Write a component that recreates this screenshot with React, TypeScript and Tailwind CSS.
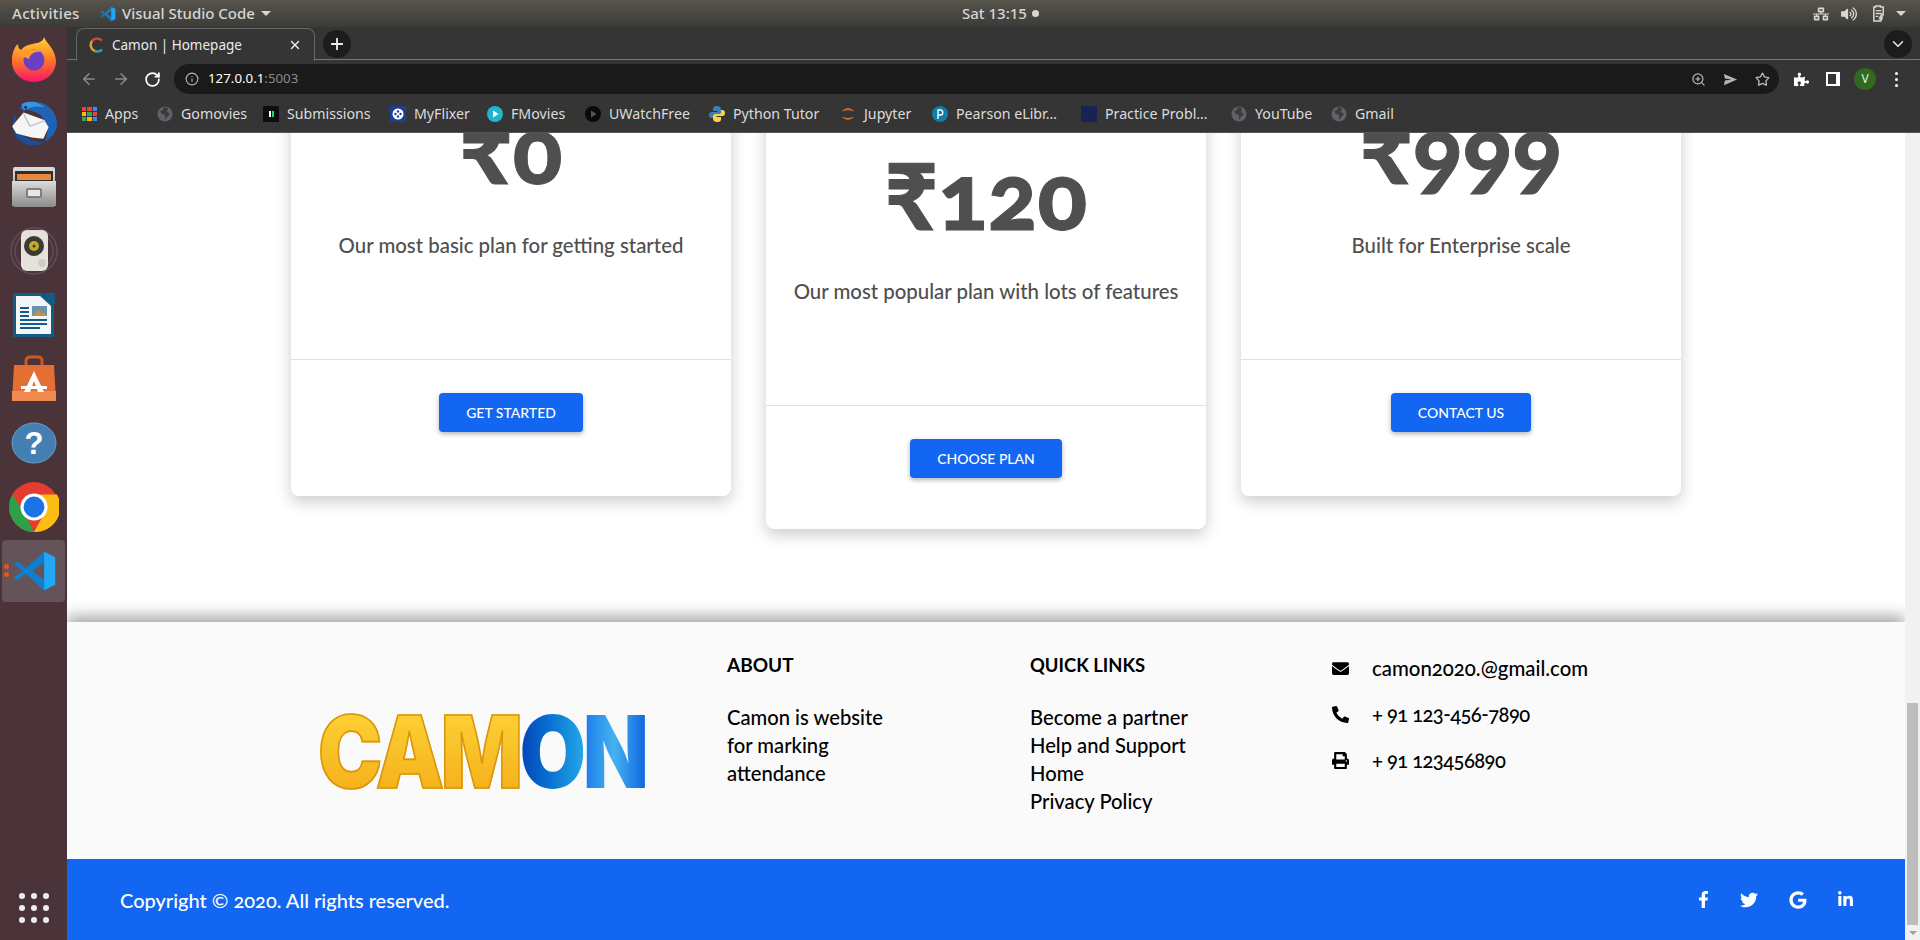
import { ArrowLeft, ArrowRight, ChevronDown, Info, Plus, RotateCw, Star, X, ZoomIn } from 'lucide-react';
import { FaEnvelope, FaFacebookF, FaGoogle, FaLinkedinIn, FaNetworkWired, FaPhoneAlt, FaPrint, FaPuzzlePiece, FaTwitter, FaVolumeUp } from 'react-icons/fa';

const ui = 'font-["Noto_Sans",sans-serif]';
const body = 'font-["Lato",sans-serif]';

function VsCode({ className }: { className: string }) {
    return (
        <svg viewBox="0 0 48 48" className={className}>
            <path d="M34 3 L46 9 V39 L34 45 L14 27 L5 34 L1 31 L11 24 L1 17 L5 14 L14 21 Z M34 14 L21 24 L34 34 Z" fill="#0e7fd0" fillRule="evenodd" />
            <path d="M34 3 L46 9 V39 L34 45 Z" fill="#22a7f2" />
        </svg>
    );
}

function Firefox() {
    return (
        <svg viewBox="0 0 48 48" className="w-12 h-12">
            <defs>
                <linearGradient id="ff" x1="0" y1="0" x2="0" y2="1">
                    <stop offset="0" stopColor="#ffd43a" />
                    <stop offset="0.5" stopColor="#ff7a25" />
                    <stop offset="1" stopColor="#f5156c" />
                </linearGradient>
            </defs>
            <path d="M34 2 C36 8 45 13 46 26 C46 38 36 47 24 47 C11 47 1 37 2 24 C2 18 5 11 8 9 C8 12 9 14 11 15 C14 11 18 10 22 9 C26 8 33 8 34 2 Z" fill="url(#ff)" />
            <circle cx="24" cy="25" r="10.5" fill="#6b3fc4" />
            <path d="M8 20 C14 14 24 13 31 17 C25 16 20 19 19 24 C15 22 11 22 8 20 Z" fill="#ff9a2e" />
        </svg>
    );
}

function Thunderbird() {
    return (
        <svg viewBox="0 0 48 48" className="w-[50px] h-[50px]">
            <path d="M10 10 C18 0 36 2 43 14 C49 24 46 36 34 42 C40 30 36 18 26 14 C20 11 14 11 10 10 Z" fill="#1f64b4" />
            <path d="M6 16 C2 24 3 36 12 42 C20 47 30 46 34 42 C24 44 12 38 8 26 Z" fill="#1a4f9c" />
            <path d="M12 6 C18 2 28 3 34 9 C26 7 20 9 14 12 Z" fill="#3a93e6" />
            <path d="M3 27 L14 14 L34 21 L38 28 L33 39 L22 38 L7 34 Z" fill="#f6f6f6" />
            <path d="M14 15 L20 27 L34 22" fill="none" stroke="#bfc5cf" strokeWidth="1.4" />
            <circle cx="16" cy="9" r="1.4" fill="#0c2f5c" />
        </svg>
    );
}

function Files() {
    return (
        <svg viewBox="0 0 48 48" className="w-12 h-12">
            <defs>
                <linearGradient id="cab" x1="0" y1="0" x2="0" y2="1">
                    <stop offset="0" stopColor="#dcdcda" />
                    <stop offset="1" stopColor="#8e8e8c" />
                </linearGradient>
            </defs>
            <rect x="3" y="4" width="42" height="40" rx="2" fill="url(#cab)" />
            <rect x="5" y="8" width="38" height="10" fill="#2f2f2f" />
            <rect x="7" y="11" width="34" height="6" fill="#e8883a" />
            <rect x="2" y="18" width="44" height="25" fill="url(#cab)" />
            <rect x="17" y="26" width="14" height="8" rx="1" fill="#e6e6e6" stroke="#666" strokeWidth="1.5" />
        </svg>
    );
}

function Speaker() {
    return (
        <svg viewBox="0 0 48 48" className="w-12 h-12">
            <circle cx="24" cy="24" r="23" fill="none" stroke="#5f4e56" strokeWidth="1.5" />
            <circle cx="24" cy="24" r="19" fill="none" stroke="#5f4e56" strokeWidth="1.5" />
            <rect x="11" y="3" width="27" height="41" rx="6" fill="#e4e2da" />
            <circle cx="24" cy="19" r="10" fill="#3a3a36" />
            <circle cx="24" cy="19" r="5" fill="#c6a826" />
            <circle cx="24" cy="19" r="1.5" fill="#3a3a36" />
            <circle cx="32" cy="36" r="4" fill="#cfcdc4" />
        </svg>
    );
}

function Writer() {
    return (
        <svg viewBox="0 0 48 48" className="w-12 h-12">
            <path d="M3 2 H31 L44 14 V46 H3 Z" fill="#155c85" />
            <path d="M6 5 H30 L41 15 V43 H6 Z" fill="#f2f6f8" />
            <path d="M33 2 H45 V13 H41 Z" fill="#155c85" />
            <rect x="22" y="15" width="15" height="10" fill="#6d93aa" />
            <path d="M23 25 L28 19 L32 23 L34 21 L37 25 Z" fill="#c98f3c" />
            <path d="M10 17 H19 M10 21 H19 M10 25 H19 M10 29 H37 M10 33 H37 M10 37 H30" stroke="#155c85" strokeWidth="2" />
        </svg>
    );
}

function Store() {
    return (
        <svg viewBox="0 0 48 48" className="w-12 h-12">
            <path d="M16 12 V6 C16 3 18 2 20 2 H28 C30 2 32 3 32 6 V12" fill="none" stroke="#c85a24" strokeWidth="3" />
            <path d="M4 10 H44 L46 46 H2 Z" fill="#e56f32" />
            <rect x="2" y="36" width="44" height="10" fill="#f08a4e" />
            <path d="M24 16 L34 37 H28 L24 26 L20 37 H14 Z" fill="#fff" />
            <rect x="11" y="31" width="26" height="3" fill="#fff" />
        </svg>
    );
}

function Help() {
    return (
        <svg viewBox="0 0 48 48" className="w-12 h-12">
            <ellipse cx="24" cy="24" rx="22" ry="20" fill="#447fb3" stroke="#6a9dc8" />
            <text x="24" y="35" textAnchor="middle" fontSize="31" fontWeight="700" fill="#fff" fontFamily="Liberation Sans, sans-serif">?</text>
        </svg>
    );
}

function Chrome({ className }: { className: string }) {
    return (
        <svg viewBox="0 0 48 48" className={className}>
            <circle cx="24" cy="24" r="24" fill="#e53b30" />
            <path d="M24 48 A24 24 0 0 1 3.2 12 L15 30 Z" fill="#2f9f4a" />
            <path d="M24 12 H46 A24 24 0 0 1 24 48 L34 30 Z" fill="#fbbd14" />
            <circle cx="24" cy="24" r="13" fill="#fff" />
            <circle cx="24" cy="24" r="10" fill="#1b73e8" />
        </svg>
    );
}

const dockItems = [Firefox, Thunderbird, Files, Speaker, Writer, Store, Help];

function Dock() {
    return (
        <div className="w-[67px] bg-[#4a343a] flex flex-col items-center shrink-0">
            {dockItems.map((Icon, i) => (
                <div key={i} className="h-16 flex items-center justify-center">
                    <Icon />
                </div>
            ))}
            <div className="h-16 flex items-center justify-center">
                <Chrome className="w-[50px] h-[50px]" />
            </div>
            <div className="relative w-[63px] h-[62px] rounded bg-[#65535a] flex items-center justify-center mt-px">
                <span className="absolute left-0.5 top-[24px] w-[5px] h-[5px] rounded-full bg-[#e95420]" />
                <span className="absolute left-0.5 top-[32px] w-[5px] h-[5px] rounded-full bg-[#e95420]" />
                <VsCode className="ml-[2px] w-11 h-11" />
            </div>
            <div className="mt-auto mb-[17px] grid grid-cols-3 gap-x-[6px] gap-y-[6px]">
                {Array.from({ length: 9 }).map((_, i) => (
                    <span key={i} className="w-[6px] h-[6px] rounded-full bg-[#eeeeee]" />
                ))}
            </div>
        </div>
    );
}

function TopBar() {
    return (
        <div className={`${ui} relative h-[27px] bg-gradient-to-b from-[#57544c] to-[#3c3b38] flex items-center text-[15px] font-medium text-[#d6d6d4]`}>
            <span className="ml-3 w-[68px] tracking-[0.3px]">Activities</span>
            <VsCode className="ml-5 w-4 h-4" />
            <span className="ml-[6px]">Visual Studio Code</span>
            <span className="ml-[6px] w-0 h-0 border-x-[5px] border-x-transparent border-t-[5px] border-t-[#d6d6d4]" />
            <div className="absolute left-[962px] top-0 h-[27px] flex items-center gap-[5px]">
                <span>Sat 13:15</span>
                <span className="w-[7px] h-[7px] rounded-full bg-[#d6d6d4]" />
            </div>
            <div className="ml-auto mr-[14px] flex items-center">
                <FaNetworkWired className="w-[16px] h-[16px]" />
                <FaVolumeUp className="ml-[12px] w-[16px] h-[16px]" />
                <svg viewBox="0 0 16 18" className="ml-[14px] w-[15px] h-[17px]">
                    <path d="M3 2 H5 V1 H10 V2 H13 V10 L9 17 H3 Z" fill="none" stroke="#d6d6d4" strokeWidth="1.6" />
                    <path d="M5 6 H11 M5 9 H11 M5 12 H8 M12 9 L9 14 H12 L10 18" stroke="#d6d6d4" strokeWidth="1.4" fill="none" />
                </svg>
                <span className="ml-[10px] w-0 h-0 border-x-[5px] border-x-transparent border-t-[5px] border-t-[#d6d6d4]" />
            </div>
        </div>
    );
}

function Globe() {
    return (
        <svg viewBox="0 0 16 16" className="w-4 h-4 shrink-0">
            <circle cx="8" cy="8" r="7.5" fill="#5f6368" />
            <path d="M6 1 C8 3 5 5 3 5 L5 8 L8 9 L8 14 L10 11 L13 8 L10 6 L11 2 Z" fill="#3a3b3d" />
        </svg>
    );
}

const bookmarks = [
    {
        label: 'Apps',
        width: 'w-[37px]',
        icon: (
            <div className="grid grid-cols-3 gap-px w-[15px] h-[14px] shrink-0">
                <i className="bg-[#ea4335]" /><i className="bg-[#ea4335]" /><i className="bg-[#4285f4]" />
                <i className="bg-[#fbbc05]" /><i className="bg-[#34a853]" /><i className="bg-[#ea4335]" />
                <i className="bg-[#34a853]" /><i className="bg-[#fbbc05]" /><i className="bg-[#4285f4]" />
            </div>
        ),
    },
    { label: 'Gomovies', width: 'w-[67px]', icon: <Globe /> },
    {
        label: 'Submissions',
        width: 'w-[88px]',
        icon: (
            <div className="w-4 h-4 shrink-0 bg-[#0b0f14] flex items-center justify-center gap-px">
                <i className="w-[2px] h-[6px] bg-white" /><i className="w-[2px] h-[6px] bg-[#1fdc68]" />
            </div>
        ),
    },
    {
        label: 'MyFlixer',
        width: 'w-[58px]',
        icon: (
            <svg viewBox="0 0 16 16" className="w-4 h-4 shrink-0">
                <rect width="16" height="16" fill="#1c3f94" />
                <circle cx="8" cy="8" r="5.5" fill="#fff" />
                <circle cx="8" cy="5.5" r="1.2" fill="#1c3f94" /><circle cx="8" cy="10.5" r="1.2" fill="#1c3f94" />
                <circle cx="5.5" cy="8" r="1.2" fill="#1c3f94" /><circle cx="10.5" cy="8" r="1.2" fill="#1c3f94" />
            </svg>
        ),
    },
    {
        label: 'FMovies',
        width: 'w-[59px]',
        icon: (
            <svg viewBox="0 0 16 16" className="w-4 h-4 shrink-0">
                <circle cx="8" cy="8" r="8" fill="#21b5cf" />
                <path d="M6 4.5 L11.5 8 L6 11.5 Z" fill="#fff" />
            </svg>
        ),
    },
    {
        label: 'UWatchFree',
        width: 'w-[85px]',
        icon: (
            <svg viewBox="0 0 16 16" className="w-4 h-4 shrink-0">
                <circle cx="8" cy="8" r="8" fill="#0a0a0a" />
                <path d="M6 4.5 L11.5 8 L6 11.5 Z" fill="#555" />
            </svg>
        ),
    },
    {
        label: 'Python Tutor',
        width: 'w-[92px]',
        icon: (
            <svg viewBox="0 0 16 16" className="w-4 h-4 shrink-0">
                <path d="M8 0 C4 0 4 2 4 3 V5 H8.5 V6 H2.5 C1 6 0 7 0 9 C0 11 1 12 2.5 12 H4 V10 C4 8.5 5 8 6 8 H10 C11 8 12 7 12 6 V3 C12 1 10 0 8 0 Z" fill="#3d7fb5" />
                <path d="M8 16 C12 16 12 14 12 13 V11 H7.5 V10 H13.5 C15 10 16 9 16 7 C16 5 15 4 13.5 4 H12 V6 C12 7.5 11 8 10 8 H6 C5 8 4 9 4 10 V13 C4 15 6 16 8 16 Z" fill="#f7d24a" />
            </svg>
        ),
    },
    {
        label: 'Jupyter',
        width: 'w-[53px]',
        icon: (
            <svg viewBox="0 0 16 16" className="w-4 h-4 shrink-0">
                <path d="M2 6 C4 1 12 1 14 6 C12 3.5 4 3.5 2 6 Z M2 10 C4 15 12 15 14 10 C12 12.5 4 12.5 2 10 Z" fill="#e46e20" />
            </svg>
        ),
    },
    {
        label: 'Pearson eLibr…',
        width: 'w-[110px]',
        icon: (
            <svg viewBox="0 0 16 16" className="w-4 h-4 shrink-0">
                <circle cx="8" cy="8" r="8" fill="#0f7ea6" />
                <path d="M6 13 V4 H9 A2.6 2.6 0 0 1 9 9 H6" fill="none" stroke="#fff" strokeWidth="1.4" />
            </svg>
        ),
    },
    {
        label: 'Practice Probl…',
        width: 'w-[111px]',
        icon: <div className="w-4 h-4 shrink-0 bg-[#16244f]" />,
    },
    { label: 'YouTube', width: 'w-[61px]', icon: <Globe /> },
    { label: 'Gmail', width: 'w-[38px]', icon: <Globe /> },
];

function Browser() {
    return (
        <div className={`${ui} bg-[#353535] text-[#e8eaed]`}>
            <div className="relative h-[33px] border-b border-[#777777] flex items-start">
                <div className="relative ml-[9px] mt-px h-[33px] w-[239px] rounded-t-lg border border-b-0 border-[#666666] bg-[#353535] flex items-center px-[12px] text-[13.5px]">
                    <svg viewBox="0 0 16 16" className="w-4 h-4 shrink-0">
                        <path d="M13 3.5 A6.5 6.5 0 0 0 3 4" fill="none" stroke="#d8452c" strokeWidth="2.5" />
                        <path d="M3 4 A6.5 6.5 0 0 0 6 14" fill="none" stroke="#e0a040" strokeWidth="2.5" />
                        <path d="M6 14 A6.5 6.5 0 0 0 13 12.5" fill="none" stroke="#3f9a9a" strokeWidth="2.5" />
                    </svg>
                    <span className="ml-[7px]">Camon | Homepage</span>
                    <X className="ml-auto w-[14px] h-[14px]" strokeWidth={2.5} />
                </div>
                <div className="ml-2 mt-[3px] w-7 h-7 rounded-full bg-[#1c1c1c] flex items-center justify-center">
                    <Plus className="w-[18px] h-[18px]" strokeWidth={2.5} />
                </div>
                <div className="ml-auto mr-2 mt-[3px] w-7 h-7 rounded-full bg-[#1c1c1c] flex items-center justify-center">
                    <ChevronDown className="w-[18px] h-[18px]" />
                </div>
            </div>
            <div className="h-[38px] flex items-center pl-[13px]">
                <ArrowLeft className="w-[18px] h-[18px] text-[#8a8a8a]" />
                <ArrowRight className="ml-[14px] w-[18px] h-[18px] text-[#8a8a8a]" />
                <RotateCw className="ml-[14px] w-[17px] h-[17px] text-white" strokeWidth={2.5} />
                <div className="ml-[13px] h-[30px] w-[1605px] rounded-full bg-[#1a1a1a] flex items-center pl-[11px] pr-[9px] text-[13.3px]">
                    <Info className="w-[14px] h-[14px] text-[#b4b4b4]" />
                    <span className="ml-[9px] text-white">127.0.0.1</span>
                    <span className="text-[#8a8a8a]">:5003</span>
                    <ZoomIn className="ml-auto w-[15px] h-[15px] text-[#b4b4b4]" />
                    <svg viewBox="0 0 16 16" className="ml-[17px] w-[15px] h-[15px]">
                        <path d="M1 2 L15 8 L1 14 L2 9 L9 8 L2 7 Z" fill="#b4b4b4" />
                    </svg>
                    <Star className="ml-[17px] w-[15px] h-[15px] text-[#b4b4b4]" strokeWidth={2.2} />
                </div>
                <FaPuzzlePiece className="ml-[15px] w-[15px] h-[15px] text-white" />
                <div className="ml-[17px] w-[14px] h-[14px] border-2 border-r-4 border-white bg-[#353535]" />
                <div className="ml-[14px] w-[22px] h-[22px] rounded-full bg-[#2f6a1f] flex items-center justify-center text-[12px]">V</div>
                <div className="ml-[19px] flex flex-col gap-[3px]">
                    <span className="w-[3px] h-[3px] rounded-full bg-white" />
                    <span className="w-[3px] h-[3px] rounded-full bg-white" />
                    <span className="w-[3px] h-[3px] rounded-full bg-white" />
                </div>
            </div>
            <div className="h-[35px] flex items-center pl-[15px] pb-[2px] gap-[15px] text-[14.2px] text-[#dcdcdc] border-b border-[#555555]">
                {bookmarks.map((b) => (
                    <div key={b.label} className="flex items-center gap-2">
                        {b.icon}
                        <span className={`${b.width} whitespace-nowrap`}>{b.label}</span>
                    </div>
                ))}
            </div>
        </div>
    );
}

function PlanCard({ price, text, cta, featured }: { price: string; text: string; cta: string; featured?: boolean }) {
    return (
        <div className={`w-[440px] rounded-lg bg-white shadow-[0_6px_16px_rgba(0,0,0,0.2)] ${featured ? '' : 'mb-[33px]'}`}>
            <div className="flex flex-col items-center pt-[100px] pb-[100px] text-[#4f4f4f]">
                <div className={`${body} font-black text-[92px] leading-[80px] oldstyle-nums mb-[42px] [-webkit-text-stroke:1px_#4f4f4f]`}>{price}</div>
                <p className={`${body} text-[20.4px] leading-7 font-medium`}>{text}</p>
            </div>
            <div className={`border-t border-[#e0e0e0] flex justify-center pt-[33px] ${featured ? 'pb-[51px]' : 'pb-[64px]'}`}>
                <button className={`${body} h-[39px] px-[27px] rounded bg-[#1266f1] text-white text-[14px] font-medium uppercase shadow-[0_2px_5px_rgba(0,0,0,0.3)]`}>
                    {cta}
                </button>
            </div>
        </div>
    );
}

function Footer() {
    return (
        <footer className={`${body} relative oldstyle-nums`}>
            <div className="h-[237px] bg-[#fafafa] shadow-[0_-6px_14px_rgba(0,0,0,0.35)] flex pl-[251px] text-black text-[20.2px] font-medium leading-7">
                <div className="w-[409px] pt-[90px]">
                    <div className='font-["Inter",sans-serif] font-black text-[86px] leading-[80px] tracking-[-3.5px] scale-y-[1.16] origin-center w-fit'>
                        <span className="bg-gradient-to-b from-[#ffd83a] to-[#f2a90f] bg-clip-text text-transparent [-webkit-text-stroke:1.5px_#d8950f]">CAM</span>
                        <span className="bg-gradient-to-r from-[#0a3fb8] to-[#25a5ea] bg-clip-text text-transparent">O</span>
                        <span className="bg-gradient-to-r from-[#1a7ae8] via-[#45b2f0] to-[#1466e0] bg-clip-text text-transparent">N</span>
                    </div>
                </div>
                <div className="w-[303px] pt-[29px]">
                    <h3 className="text-[19px] font-bold uppercase">About</h3>
                    <p className="mt-[24px] w-[170px]">Camon is website for marking attendance</p>
                </div>
                <div className="w-[302px] pt-[29px]">
                    <h3 className="text-[18.4px] font-bold uppercase">Quick Links</h3>
                    <ul className="mt-[24px]">
                        <li>Become a partner</li>
                        <li>Help and Support</li>
                        <li>Home</li>
                        <li>Privacy Policy</li>
                    </ul>
                </div>
                <div className="pt-[32px] flex flex-col gap-[18px]">
                    <div className="flex items-center gap-[23px]"><FaEnvelope className="w-[17px] h-[17px]" /><span className="text-[20.4px]">camon2020.@gmail.com</span></div>
                    <div className="flex items-center gap-[23px]"><FaPhoneAlt className="w-[17px] h-[17px]" /><span className="tracking-[-0.55px]">+ 91 123-456-7890</span></div>
                    <div className="flex items-center gap-[23px]"><FaPrint className="w-[17px] h-[17px]" /><span className="tracking-[-0.55px]">+ 91 123456890</span></div>
                </div>
            </div>
            <div className="h-[81px] bg-[#1266f1] text-white flex items-center pl-[53px] pr-[51px] text-[20px] font-medium">
                <span>Copyright © 2020. All rights reserved.</span>
                <div className="ml-auto flex items-center">
                    <FaFacebookF className="w-[17px] h-[17px]" />
                    <FaTwitter className="ml-[28px] w-[18px] h-[18px]" />
                    <FaGoogle className="ml-[31px] w-[18px] h-[18px]" />
                    <FaLinkedinIn className="ml-[30px] w-[17px] h-[17px]" />
                </div>
            </div>
        </footer>
    );
}

function Scrollbar() {
    return (
        <div className="w-[15px] bg-[#f1f1f1] relative shrink-0">
            <div className="absolute left-[2px] right-[2px] bottom-[15px] h-[222px] bg-[#bdbdbd]" />
            <span className="absolute left-1 bottom-[5px] w-0 h-0 border-x-[4px] border-x-transparent border-t-[4px] border-t-[#a0a0a0]" />
        </div>
    );
}

export default function App() {
    return (
        <div className="w-[1920px] h-[940px] overflow-hidden flex flex-col">
            <TopBar />
            <div className="flex-1 flex min-h-0">
                <Dock />
                <div className="flex-1 flex flex-col min-w-0">
                    <Browser />
                    <div className="flex-1 flex min-h-0">
                        <main className="flex-1 flex flex-col justify-end overflow-hidden bg-white">
                            <section className="flex justify-center items-end gap-[35px] pb-[93px]">
                                <PlanCard price="₹0" text="Our most basic plan for getting started" cta="Get started" />
                                <PlanCard price="₹120" text="Our most popular plan with lots of features" cta="Choose plan" featured />
                                <PlanCard price="₹999" text="Built for Enterprise scale" cta="Contact us" />
                            </section>
                            <Footer />
                        </main>
                        <Scrollbar />
                    </div>
                </div>
            </div>
        </div>
    );
}
